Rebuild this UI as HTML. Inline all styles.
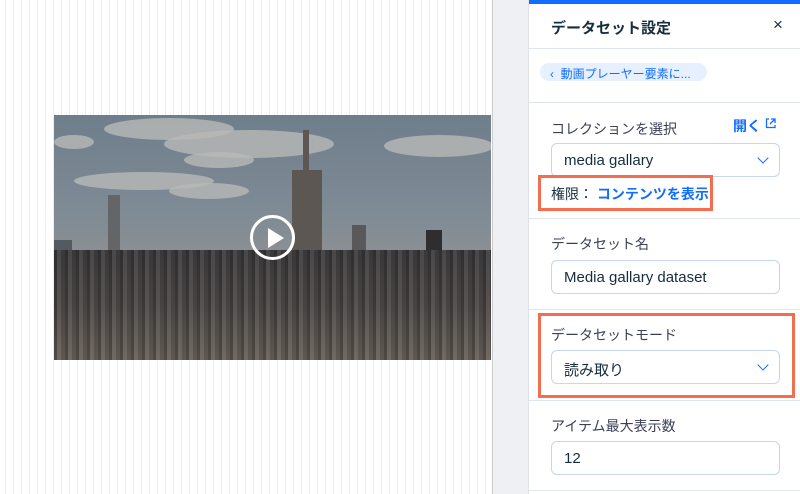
<!DOCTYPE html>
<html><head><meta charset="utf-8"><style>
*{margin:0;padding:0;box-sizing:border-box}
body{width:800px;height:494px;overflow:hidden;position:relative;background:#fff;font-family:"Liberation Sans","Noto Sans CJK JP",sans-serif}
.left{position:absolute;left:0;top:0;width:492px;height:494px;background:repeating-linear-gradient(90deg,#fff 0 5px,#ececec 5px 6px,#fff 6px 8px)}
.strip{position:absolute;left:492px;top:0;width:36px;height:494px;background:#eef0f3;border-left:1px solid #ccc}
.video{position:absolute;left:54px;top:115px;width:437px;height:245px;background:linear-gradient(180deg,#6f7e8c 0%,#7f8b95 40%,#8a8f94 55%);overflow:hidden}
.cl{position:absolute;background:#b8b9b7;border-radius:50%;opacity:.8}
.bld{position:absolute;bottom:0;background:#3b3a3b}
.city{position:absolute;left:0;bottom:0;width:437px;height:110px;background:repeating-linear-gradient(90deg,rgba(0,0,0,.25) 0 3px,rgba(255,255,255,.05) 3px 7px,rgba(0,0,0,.1) 7px 11px),linear-gradient(180deg,#3f3e40 0%,#4e4a48 50%,#6a625b 100%)}
.play{position:absolute;left:196px;top:100px;width:45px;height:45px;border:3px solid #fff;border-radius:50%}
.play:after{content:"";position:absolute;left:15px;top:10px;border-left:16px solid #fff;border-top:10px solid transparent;border-bottom:10px solid transparent}
.panel{position:absolute;left:528px;top:0;width:272px;height:494px;background:#fff;border-left:1px solid #dfe3e8}
.bar{position:absolute;left:0;top:0;width:272px;height:4px;background:#116dff}
.sep{position:absolute;left:0;width:272px;height:1px;background:#dfe5eb}
.t{position:absolute;white-space:nowrap}
.lab{font-size:14px;color:#3b4057}
.inp{position:absolute;left:22px;width:229px;height:34px;border:1px solid #c6d5f0;border-radius:6px;font-size:15px;color:#162d3d;padding:8px 12px}
.chev{position:absolute;right:12px;top:10px;width:8px;height:8px;border-right:1.5px solid #116dff;border-bottom:1.5px solid #116dff;transform:rotate(45deg)}
.red{position:absolute;border:3px solid #f36d4f}
</style></head><body>
<div class="left"></div>
<div class="video">
<div class="cl" style="left:50px;top:3px;width:130px;height:22px"></div>
<div class="cl" style="left:110px;top:15px;width:170px;height:28px"></div>
<div class="cl" style="left:130px;top:37px;width:70px;height:16px"></div>
<div class="cl" style="left:20px;top:57px;width:140px;height:18px"></div>
<div class="cl" style="left:115px;top:68px;width:80px;height:16px"></div>
<div class="cl" style="left:330px;top:20px;width:110px;height:22px"></div>
<div class="cl" style="left:0px;top:20px;width:40px;height:14px"></div>
<div class="bld" style="left:0;height:120px;width:18px;background:#555a60"></div>
<div class="bld" style="left:54px;height:165px;width:12px;background:#646566"></div>
<div class="bld" style="left:95px;height:100px;width:25px;background:#6a6866"></div>
<div class="bld" style="left:150px;height:110px;width:40px;background:#5a5b5e"></div>
<div class="bld" style="left:200px;height:100px;width:30px;background:#3a393b"></div>
<div class="bld" style="left:238px;height:190px;width:30px;background:#5d5753"></div>
<div class="bld" style="left:249px;height:230px;width:6px;background:#5d5753"></div>
<div class="bld" style="left:298px;height:135px;width:14px;background:#5a5859"></div>
<div class="bld" style="left:372px;height:130px;width:16px;background:#2e2e30"></div>
<div class="city"></div>
<div class="play"></div>
</div>
<div class="strip"></div>
<div class="panel">
<div class="bar"></div>
<div class="t" style="left:22px;top:17px;font-size:15px;font-weight:bold;color:#162d3d">データセット設定</div>
<div class="t" style="left:244px;top:15px;font-size:17px;color:#162d3d">×</div>
<div class="sep" style="top:48px"></div>
<div class="t" style="left:11px;top:63px;height:18px;width:167px;background:#e7f0ff;border-radius:9px;font-size:12px;color:#116dff;padding:2px 0 0 10px">‹&nbsp; 動画プレーヤー要素に...</div>
<div class="sep" style="top:102px"></div>
<div class="t lab" style="left:22px;top:119px">コレクションを選択</div>
<div class="t" style="left:204px;top:116px;font-size:14px;font-weight:bold;color:#116dff">開く</div>
<svg class="t" style="left:236px;top:118px" width="11" height="11" viewBox="0 0 11 11"><path d="M4 1H1.5v8.5H10V7M6 1h4v4M10 1L5 6" fill="none" stroke="#116dff" stroke-width="1.3"/></svg>
<div class="inp" style="top:143px">media gallary<div class="chev"></div></div>
<div class="red" style="left:9px;top:175px;width:175px;height:36px"></div>
<div class="t" style="left:22px;top:184px;font-size:14px;color:#162d3d">権限： <span style="color:#116dff;font-weight:bold">コンテンツを表示</span></div>
<div class="sep" style="top:218px"></div>
<div class="t lab" style="left:22px;top:234px">データセット名</div>
<div class="inp" style="top:260px">Media gallary dataset</div>
<div class="sep" style="top:309px"></div>
<div class="red" style="left:9px;top:313px;width:257px;height:85px"></div>
<div class="t lab" style="left:22px;top:325px">データセットモード</div>
<div class="inp" style="top:350px">読み取り<div class="chev"></div></div>
<div class="sep" style="top:400px"></div>
<div class="t lab" style="left:22px;top:416px">アイテム最大表示数</div>
<div class="inp" style="top:441px">12</div>
<div class="sep" style="top:490px"></div>
</div>
</body></html>
